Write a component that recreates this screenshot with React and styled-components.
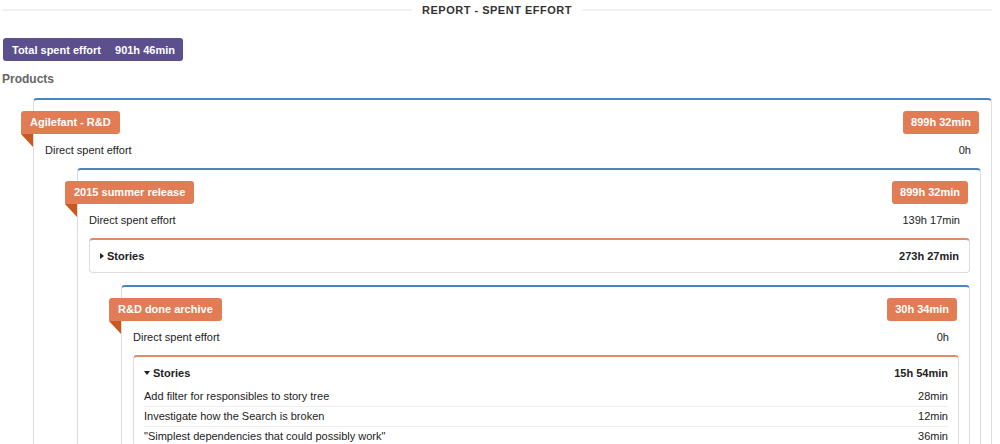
import styled, { createGlobalStyle } from 'styled-components';

const GlobalStyle = createGlobalStyle`
	html, body {
		margin: 0;
		overflow: hidden;
		background: #fff;
	}
	body {
		font-family: "Liberation Sans", Arial, sans-serif;
		font-size: 11px;
		color: #222;
	}
`

const report = {
	total: '901h 46min',
	product: {
		name: 'Agilefant - R&D',
		total: '899h 32min',
		direct: '0h',
		children: [
			{
				name: '2015 summer release',
				total: '899h 32min',
				direct: '139h 17min',
				stories: { open: false, total: '273h 27min' },
				children: [
					{
						name: 'R&D done archive',
						total: '30h 34min',
						direct: '0h',
						stories: {
							open: true,
							total: '15h 54min',
							items: [
								{ name: 'Add filter for responsibles to story tree', effort: '28min' },
								{ name: 'Investigate how the Search is broken', effort: '12min' },
								{ name: '"Simplest dependencies that could possibly work"', effort: '36min' },
							]
						}
					}
				]
			}
		]
	}
}

function Stories({ stories }) {
	return (
		<Panel>
			<PanelHead $open={stories.open}>
				<PanelTitle>
					<Caret $open={stories.open} />
					Stories
				</PanelTitle>
				<span>{stories.total}</span>
			</PanelHead>
			{
				stories.open && stories.items.map((s, i) =>
					<StoryRow key={i}>
						<span>{s.name}</span>
						<span>{s.effort}</span>
					</StoryRow>
				)
			}
		</Panel>
	)
}

function Node({ node, nested }) {
	return (
		<Box $nested={nested}>
			<TagRow>
				<NameTag>{node.name}</NameTag>
				<TotalTag>{node.total}</TotalTag>
			</TagRow>
			<DirectRow>
				<span>Direct spent effort</span>
				<span>{node.direct}</span>
			</DirectRow>
			{ node.stories && <Stories stories={node.stories} /> }
			{
				node.children && node.children.map((c, i) =>
					<Node node={c} nested key={i} />
				)
			}
		</Box>
	)
}

function App() {
	return (
		<Page>
			<GlobalStyle />
			<TitleBar>
				<Rule />
				<Title>REPORT - SPENT EFFORT</Title>
				<Rule />
			</TitleBar>
			<TotalBadge>
				<span>Total spent effort</span>
				<span>{report.total}</span>
			</TotalBadge>
			<Heading>Products</Heading>
			<Products>
				<Node node={report.product} />
			</Products>
		</Page>
	)
}

const Page = styled.div`
	padding: 0 8px 0 2px;
`

const TitleBar = styled.div`
	display: flex;
	align-items: center;
	gap: 10px;
	height: 20px;
`

const Rule = styled.div`
	flex: 1;
	height: 2px;
	background: #f1f1f1;
`

const Title = styled.h1`
	margin: 0;
	font-size: 11px;
	font-weight: bold;
	letter-spacing: 0.5px;
	color: #333;
`

const TotalBadge = styled.div`
	display: inline-flex;
	align-items: center;
	gap: 14px;
	margin: 18px 0 0 1px;
	height: 23px;
	padding: 0 8px 0 9px;
	border-radius: 3px;
	background: #5b4f8d;
	color: #fff;
	font-weight: bold;
`

const Heading = styled.h2`
	margin: 10px 0 0;
	font-size: 12px;
	line-height: 16px;
	color: #666;
`

const Products = styled.div`
	margin: 11px 0 0 31px;
`

const Box = styled.section`
	margin-top: ${p => p.$nested ? '8px' : '0'};
	margin-left: ${p => p.$nested ? '32px' : '0'};
	padding: 11px 10px 14px 11px;
	border: 1px solid #ddd;
	border-top: 2px solid #4a84c2;
	border-radius: 4px 4px 0 0;
`

const TagRow = styled.div`
	display: flex;
	justify-content: space-between;
	align-items: center;
	padding-right: 2px;
`

const Tag = styled.div`
	height: 23px;
	line-height: 23px;
	padding: 0 8px;
	border-radius: 3px;
	background: #e27c55;
	color: #fff;
	font-weight: bold;
`

const NameTag = styled(Tag)`
	position: relative;
	margin-left: -24px;
	padding: 0 9px;
	border-bottom-left-radius: 0;

	&::after {
		content: "";
		position: absolute;
		left: 0;
		top: 23px;
		border-top: 13px solid #c9581f;
		border-left: 12px solid transparent;
	}
`

const TotalTag = styled(Tag)``

const DirectRow = styled.div`
	display: flex;
	justify-content: space-between;
	margin-top: 6px;
	padding-right: 10px;
	line-height: 20px;
`

const Panel = styled.div`
	margin: 8px 0 12px;
	border: 1px solid #ddd;
	border-top: 2px solid #e28a66;
	border-radius: 4px;
`

const PanelHead = styled.div`
	display: flex;
	justify-content: space-between;
	align-items: center;
	height: ${p => p.$open ? '29px' : '32px'};
	padding: ${p => p.$open ? '1px' : '0'} 10px 0;
	font-weight: bold;
	color: #222;
`

const PanelTitle = styled.span`
	display: flex;
	align-items: center;
	gap: 3px;
`

const Caret = styled.span`
	display: inline-block;
	width: 0;
	height: 0;
	${p => p.$open ? `
		border-top: 4px solid #222;
		border-left: 3px solid transparent;
		border-right: 3px solid transparent;
	` : `
		border-left: 4px solid #222;
		border-top: 3px solid transparent;
		border-bottom: 3px solid transparent;
	`}
`

const StoryRow = styled.div`
	display: flex;
	justify-content: space-between;
	margin: 0 10px;
	line-height: 19px;

	& + & {
		border-top: 1px solid #eee;
	}
`

export default App;
